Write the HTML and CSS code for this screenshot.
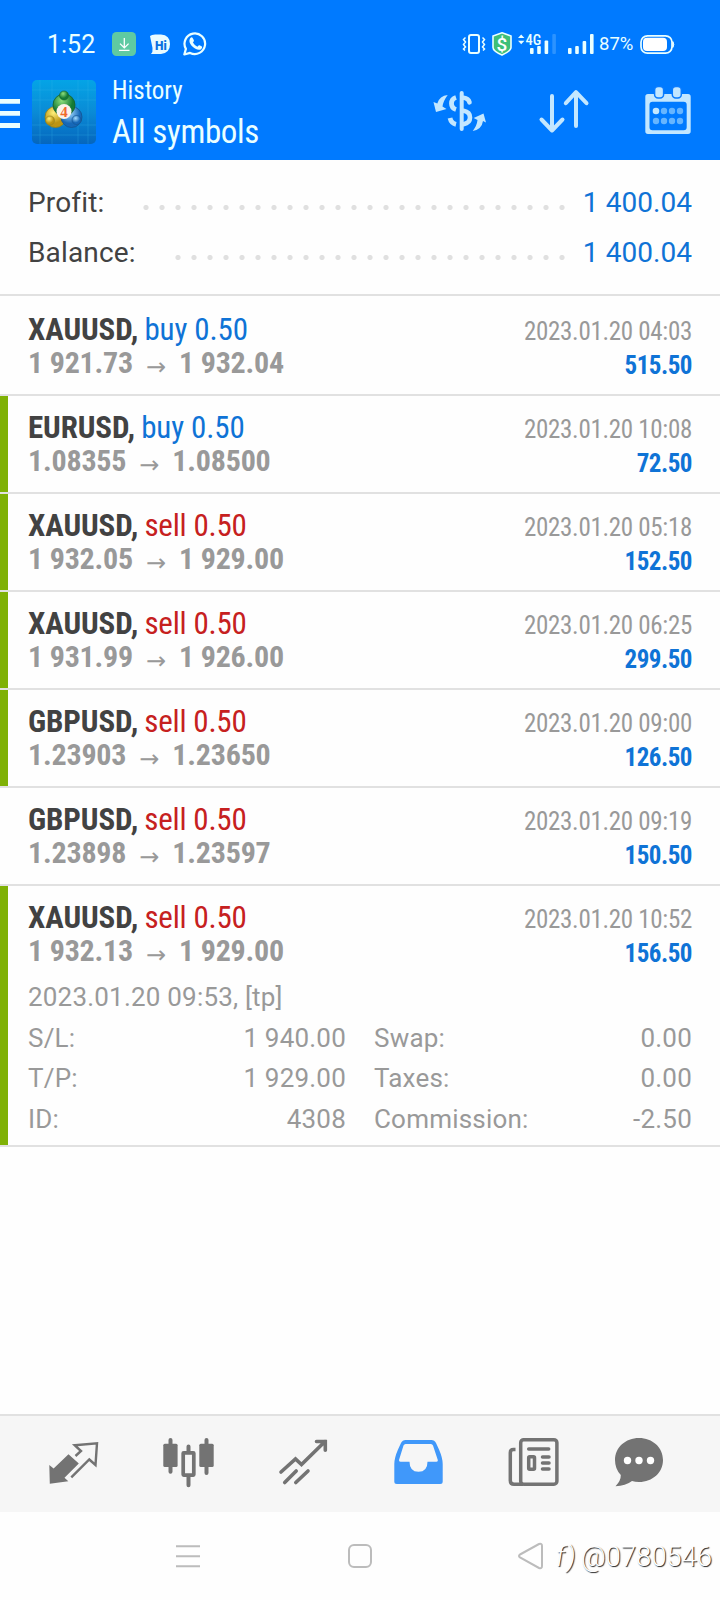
FILE: index.html
```
<!DOCTYPE html>
<html lang="en">
<head>
<meta charset="utf-8">
<title>History</title>
<link rel="stylesheet" href="styles.css">
</head>
<body>
<div class="screen">
  <header class="header">
    <div class="status">
      <span class="clock">1:52</span>
      <svg class="status-left" viewBox="112 32 96 24">
        <rect x="112" y="32" width="24" height="24" rx="4.5" fill="#5fcaa2"/>
        <path d="M124.3 38v9.5M120 43.6l4.3 4.3 4.3-4.3M119 50.3h10.5" fill="none" stroke="#fff" stroke-width="1.3"/>
        <path d="M150 36q2-2 7-1.500h4q9 .5 9 9.500t-9 10h-10q2-2 1.500-6z" fill="#e9fbff"/>
        <text x="155" y="49.500" class="hi">Hi</text>
        <path d="M184.300 54.500l1.600-5.600a10.300 10.300 0 1 1 4.200 4z" fill="none" stroke="#eaffff" stroke-width="2.200" stroke-linejoin="round"/>
        <path d="M190.200 38.200q1.500-1.500 2.500-.3l1.200 2.400q.3.900-1 2.200 1.600 2.900 4.500 4.200 1.500-1.700 2.200-1.400l2.300 1.300q.8.700-.6 2.300-2.200 2-6.300-.5-4.500-2.900-5.500-6.500-.4-2.200.7-3.700z" fill="#eaffff"/>
      </svg>
      <svg class="status-right" viewBox="462 32 134 24">
        <g fill="none" stroke="#eaffff">
          <rect x="469" y="35" width="10" height="18" rx="2" stroke-width="2"/>
          <path d="M465.500 37.500l-2 2 2 2.500-2 2.500 2 2.500-2 2 1.500 1.500M482.500 37.500l2 2-2 2.500 2 2.500-2 2.500 2 2-1.500 1.500" stroke-width="1.500"/>
        </g>
        <path d="M502 32.800l9 3.200v11.500q0 3.500-9 7.500-9-4-9-7.500V36z" fill="#3ebf78" stroke="#eaffff" stroke-width="1.600"/>
        <text x="502" y="50.500" text-anchor="middle" class="dollar">$</text>
        <path d="M518 38l3.200-3.600 3.200 3.600zM518 40.700l3.200 3.600 3.200-3.600z" fill="#eaffff"/>
        <text x="525.500" y="45.300" class="net">4G</text>
        <g fill="#eaffff">
          <rect x="530" y="48" width="3.600" height="6" rx="1"/>
          <rect x="537.200" y="46" width="3.600" height="8" rx="1"/>
          <rect x="544.600" y="40.500" width="3.600" height="13.500" rx="1"/>
          <rect x="552.300" y="34" width="3.600" height="20" rx="1" fill="#2c93ff"/>
          <rect x="568" y="48" width="3.600" height="6" rx="1"/>
          <rect x="575.200" y="46" width="3.600" height="8" rx="1"/>
          <rect x="582.600" y="41" width="3.600" height="13" rx="1"/>
          <rect x="590" y="34" width="3.600" height="20" rx="1"/>
        </g>
      </svg>
      <span class="percent">87%</span>
      <svg class="battery" viewBox="640 32 36 24">
        <rect x="641" y="35.800" width="31" height="17.400" rx="6.500" fill="none" stroke="#eaffff" stroke-width="1.700"/>
        <rect x="643" y="37.800" width="24" height="13.200" rx="4" fill="#fff"/>
        <path d="M672.800 41.500q2 3 0 6z" fill="#eaffff" stroke="#eaffff"/>
      </svg>
    </div>
    <div class="toolbar">
      <svg class="burger" viewBox="0 96 20 36"><path d="M0 101.400h20M0 113.400h20M0 125.500h20" stroke="#eaffff" stroke-width="4.800"/></svg>
      <svg class="app-icon" viewBox="0 0 64 64">
        <defs>
          <linearGradient id="bg" x1="0" y1="0" x2="0" y2="1"><stop offset="0" stop-color="#04a4e6"/><stop offset=".5" stop-color="#0a8bd6"/><stop offset="1" stop-color="#0566bd"/></linearGradient>
          <radialGradient id="green" cx=".4" cy=".3"><stop offset="0" stop-color="#8ee07c"/><stop offset="1" stop-color="#157b36"/></radialGradient>
          <radialGradient id="gold" cx=".4" cy=".3"><stop offset="0" stop-color="#fff07a"/><stop offset="1" stop-color="#bd9412"/></radialGradient>
          <radialGradient id="blue" cx=".4" cy=".3"><stop offset="0" stop-color="#a4dcff"/><stop offset="1" stop-color="#1668b8"/></radialGradient>
        </defs>
        <rect width="64" height="64" rx="5" fill="url(#bg)"/>
        <path d="M8 0v64M20 0v64M46 0v64M56 0v64M0 10h64M0 20h64M0 45h64M0 55h64" stroke="#3bb8ec" stroke-width=".6" opacity=".45"/>
        <circle cx="23.500" cy="37" r="10.500" fill="url(#gold)" stroke="#8b7f22" stroke-width=".8"/>
        <circle cx="39.500" cy="37" r="10.500" fill="url(#blue)" stroke="#145390" stroke-width=".8"/>
        <circle cx="32" cy="25" r="11" fill="url(#green)" stroke="#14612f" stroke-width=".8"/>
        <circle cx="32" cy="15.500" r="4.500" fill="url(#green)" stroke="#14612f" stroke-width=".6"/>
        <circle cx="18" cy="40.500" r="4.500" fill="url(#gold)" stroke="#8b7f22" stroke-width=".6"/>
        <circle cx="44.500" cy="40" r="4.500" fill="url(#blue)" stroke="#145390" stroke-width=".6"/>
        <circle cx="32" cy="31.500" r="7.500" fill="#fbf3ea"/>
        <text x="32" y="37" text-anchor="middle" class="four">4</text>
      </svg>
      <div class="titles">
        <div class="title-small">History</div>
        <div class="title-big">All symbols</div>
      </div>
      <svg class="actions" viewBox="432 84 260 52">
        <g fill="none" stroke="#c3e7ff" stroke-width="4" stroke-linecap="round">
          <path d="M461.700 93v36"/>
          <path d="M463.500 97.800q5 .7 6 4.500M463.500 110.800q6.500 1.200 6.500 6.700t-6.500 6.700" stroke-width="4.600"/>
          <path d="M456 97.500q-4.500 1.400-4.500 6t4.500 6M450 118q1.200 5.200 6 6.300" stroke-linecap="butt" stroke-width="4.800"/>
          <path d="M552 96v34M541.500 119.500l10.500 11 10.500-11M576 126V93M565.800 103.200l10.200-11 10.500 11" stroke-linejoin="round"/>
        </g>
        <g fill="#c3e7ff">
          <path d="M447.700 95q-8 .5-10.400 8.500l-3.800-1.500 2.500 10 10.500-3-4-2.500q.7-5.500 5.200-11.500z"/>
          <path d="M472.700 131q9-1.500 10.300-10l3 1.500-2.500-9-9.800 4.500 3.800 2q-.5 5.500-4.800 11z"/>
          <path fill-rule="evenodd" d="M648 94h40q2.700 0 2.700 2.700v34.600q0 2.700-2.700 2.700h-40q-2.700 0-2.700-2.700V96.700q0-2.700 2.700-2.700zM652.500 101.700q-3 0-3 3v22.500q0 3 3 3h31.200q3 0 3-3v-22.500q0-3-3-3z"/>
        </g>
        <g fill="#c3e7ff" stroke="#0a7cff" stroke-width="1.500">
          <rect x="654.600" y="86.500" width="9" height="11.500" rx="3.500"/>
          <rect x="672.300" y="86.500" width="9" height="11.500" rx="3.500"/>
        </g>
        <g fill="#66b5ff">
          <circle cx="656" cy="111" r="3.300" fill="#c3e7ff"/><circle cx="664" cy="111" r="3.200"/><circle cx="672" cy="111" r="3.200"/><circle cx="680" cy="111" r="3.200"/>
          <circle cx="656" cy="121" r="3.200"/><circle cx="664" cy="121" r="3.200"/><circle cx="672" cy="121" r="3.200"/><circle cx="680" cy="121" r="3.200"/>
        </g>
      </svg>
    </div>
  </header>

  <section class="summary">
    <div class="sum-row"><span>Profit:</span><i class="dots dots-long"></i><span class="sum-value">1 400.04</span></div>
    <div class="sum-row"><span>Balance:</span><i class="dots dots-short"></i><span class="sum-value">1 400.04</span></div>
  </section>

  <main class="deals">
    <article class="deal first">
      <div class="line"><span><b class="symbol">XAUUSD,</b> <span class="buy">buy 0.50</span></span><span class="time">2023.01.20 04:03</span></div>
      <div class="line result"><span class="price">1 921.73<span class="arrow">→</span>1 932.04</span><span class="gain">515.50</span></div>
    </article>
    <article class="deal closed">
      <div class="line"><span><b class="symbol">EURUSD,</b> <span class="buy">buy 0.50</span></span><span class="time">2023.01.20 10:08</span></div>
      <div class="line result"><span class="price">1.08355<span class="arrow">→</span>1.08500</span><span class="gain">72.50</span></div>
    </article>
    <article class="deal closed">
      <div class="line"><span><b class="symbol">XAUUSD,</b> <span class="sell">sell 0.50</span></span><span class="time">2023.01.20 05:18</span></div>
      <div class="line result"><span class="price">1 932.05<span class="arrow">→</span>1 929.00</span><span class="gain">152.50</span></div>
    </article>
    <article class="deal closed">
      <div class="line"><span><b class="symbol">XAUUSD,</b> <span class="sell">sell 0.50</span></span><span class="time">2023.01.20 06:25</span></div>
      <div class="line result"><span class="price">1 931.99<span class="arrow">→</span>1 926.00</span><span class="gain">299.50</span></div>
    </article>
    <article class="deal closed">
      <div class="line"><span><b class="symbol">GBPUSD,</b> <span class="sell">sell 0.50</span></span><span class="time">2023.01.20 09:00</span></div>
      <div class="line result"><span class="price">1.23903<span class="arrow">→</span>1.23650</span><span class="gain">126.50</span></div>
    </article>
    <article class="deal">
      <div class="line"><span><b class="symbol">GBPUSD,</b> <span class="sell">sell 0.50</span></span><span class="time">2023.01.20 09:19</span></div>
      <div class="line result"><span class="price">1.23898<span class="arrow">→</span>1.23597</span><span class="gain">150.50</span></div>
    </article>
    <article class="deal closed expanded">
      <div class="line"><span><b class="symbol">XAUUSD,</b> <span class="sell">sell 0.50</span></span><span class="time">2023.01.20 10:52</span></div>
      <div class="line result"><span class="price">1 932.13<span class="arrow">→</span>1 929.00</span><span class="gain">156.50</span></div>
      <div class="details">
        <div class="opened">2023.01.20 09:53, [tp]</div>
        <div class="pair"><span>S/L:</span><span>1 940.00</span></div>
        <div class="pair"><span>Swap:</span><span>0.00</span></div>
        <div class="pair"><span>T/P:</span><span>1 929.00</span></div>
        <div class="pair"><span>Taxes:</span><span>0.00</span></div>
        <div class="pair"><span>ID:</span><span>4308</span></div>
        <div class="pair"><span>Commission:</span><span>-2.50</span></div>
      </div>
    </article>
  </main>

  <nav class="tabs">
    <svg class="tab" viewBox="16 1416 115 96">
      <path d="M49.300 1465l4.300 3.500 14.900-14.200 10.300 9.200-14.300 14.300 3.800 3.500-18.500 2.500z" fill="#737373"/>
      <path d="M75.500 1456l5.500-5-6.300-5.800 22.300-2-1.500 21.800-6.200-5.500-18 17.800" fill="none" stroke="#737373" stroke-width="2.400"/>
    </svg>
    <svg class="tab" viewBox="131 1416 115 96">
      <path d="M170.500 1440v31.700M188.500 1446.500v5M188.500 1477v8.200M206.500 1440v33" stroke="#737373" stroke-width="4" stroke-linecap="round"/>
      <g fill="#737373"><rect x="163.300" y="1443.700" width="14.300" height="23.300" rx="1.500"/><rect x="199.300" y="1443.700" width="14.400" height="23.300" rx="1.500"/></g>
      <rect x="183.200" y="1452.800" width="10.600" height="22.300" rx=".5" fill="#f6f6f6" stroke="#737373" stroke-width="3.700"/>
    </svg>
    <svg class="tab" viewBox="246 1416 115 96">
      <path d="M281 1472l14.500-13 6 5.500 23.500-23M316.500 1441.500h8.800v8.800M284.700 1482.500l11.500-11.500M295.800 1482.500l12.200-11.500" fill="none" stroke="#737373" stroke-width="3.600" stroke-linecap="round"/>
    </svg>
    <svg class="tab" viewBox="361 1416 115 96">
      <path fill="#4098fa" fill-rule="evenodd" d="M394.300 1464q0-6 3.700-14.500l3-6.500q1.500-3 4.500-3h26q3 0 4.500 3l3 6.500q3.700 8.500 3.700 14.500v17.500q0 2.500-2.500 2.500h-43.400q-2.500 0-2.500-2.500zM405.500 1444q-1.300 0-2 1.500l-4.500 14.500q-.3 1.800 1.500 1.800h9q0 10 9 10t9-10h9q1.700 0 1.300-1.800l-4.800-14.500q-.7-1.500-2-1.500z"/>
    </svg>
    <svg class="tab" viewBox="476 1416 115 96">
      <g fill="none" stroke="#737373" stroke-width="3.500">
        <path d="M515.500 1449.500h-2q-3.200 0-3.200 3.200v27.700q0 3.800 3.800 3.800h9"/>
        <rect x="520.700" y="1439.700" width="36.200" height="44.500" rx="3"/>
        <path d="M528.700 1449h20M542.500 1457h6.500M542.500 1463h6.500M542.500 1469h6.500" stroke-linecap="round"/>
        <rect x="528.700" y="1456.700" width="5.800" height="12.600" rx="1"/>
      </g>
    </svg>
    <svg class="tab" viewBox="591 1416 115 96">
      <path fill="#737373" d="M639 1438c13.500 0 24 9.500 24 22s-10.500 22-24 22q-4 0-7-1-6.500 5-16.500 5.200 5.500-5.500 5.300-11.200-5.800-6-5.800-15c0-12.500 10.500-22 24-22z"/>
      <g fill="#fff"><circle cx="627.500" cy="1460.500" r="3.700"/><circle cx="639" cy="1460.500" r="3.700"/><circle cx="650.500" cy="1460.500" r="3.700"/></g>
    </svg>
  </nav>

  <footer class="system">
    <svg class="sys-icons" viewBox="172 1538 376 36">
      <g fill="none" stroke="#bcbcbc" stroke-width="2">
        <path d="M176 1546.300h24M176 1556.300h24M176 1566.300h24"/>
        <rect x="349" y="1545" width="22" height="22" rx="5"/>
        <path d="M520 1554.500l19-10.500q3-1 3 2v20q0 3-3 2l-19-10.500q-2-1.500 0-3z"/>
      </g>
    </svg>
    <div class="watermark"><span class="mark">f)</span>@0780546</div>
  </footer>
</div>
</body>
</html>
```
FILE: styles.css
```
* { box-sizing: border-box; }
body { margin: 0; background: #fff; font-family: Roboto, "Liberation Sans", sans-serif; }
svg { display: block; flex: none; }
.screen { width: 720px; height: 1600px; display: flex; flex-direction: column; background: #fefefe; overflow: hidden; }

.header { height: 160px; padding-top: 20px; background: #007aff; color: #eaffff; }
.status { height: 48px; display: flex; align-items: center; padding-left: 47px; }
.clock { width: 65px; padding-top: 1px; font-size: 25px; line-height: 30px; }
.status-left { width: 96px; height: 24px; }
.status-right { width: 134px; height: 24px; margin-left: 254px; }
.percent { width: 44px; padding-left: 3px; font-size: 18.5px; line-height: 24px; }
.battery { width: 36px; height: 24px; }
.hi { font: 900 12px Roboto, sans-serif; fill: #0b6fe0; }
.dollar { font: 500 19px Roboto, sans-serif; fill: #fff; }
.net { font: 500 14.500px "Roboto Condensed", sans-serif; fill: #eaffff; }
.four { font: 700 15px "Liberation Serif", serif; fill: #f0692c; }

.toolbar { display: flex; align-items: flex-start; padding-top: 6px; }
.burger { width: 20px; height: 36px; margin-top: 22px; }
.app-icon { width: 64px; height: 64px; margin: 6px 0 0 12px; }
.titles { width: 320px; padding: 1px 0 0 16px; font-family: "Roboto Condensed", Roboto, sans-serif; }
.title-small { font-size: 25px; line-height: 32px; }
.title-big { margin-top: 4px; font-size: 33px; line-height: 42px; letter-spacing: -.35px; }
.actions { width: 260px; height: 52px; margin: 10px 0 0 16px; }

.summary { height: 136px; padding: 18px 28px 0; border-bottom: 2px solid #e1e1e1; }
.sum-row { height: 50px; display: flex; font-size: 28px; line-height: 50px; color: #424242; letter-spacing: .15px; }
.sum-value { width: 122px; text-align: right; color: #0f73d6; letter-spacing: .05px; }
.dots { height: 16px; margin: 22px 0 0 auto; background: radial-gradient(circle at 8px 7.500px, #e0e0e0 2.2px, transparent 3px) 0 0 / 16px 16px; }
.dots-long { width: 432px; }
.dots-short { width: 400px; }

.deal { height: 98px; padding: 15px 28px 0; border-bottom: 2px solid #e1e1e1; font-family: "Roboto Condensed", Roboto, sans-serif; }
.first { height: 100px; padding-top: 17px; }
.closed { background: linear-gradient(#7fb106, #7fb106) 0 0 / 8px 100% no-repeat; }
.expanded { height: 261px; }
.line { height: 33px; display: flex; justify-content: space-between; align-items: baseline; font-size: 31px; line-height: 34px; }
.result { height: 34px; align-items: flex-start; }
.symbol { color: #424242; letter-spacing: -.1px; }
.buy, .sell { margin-left: -1px; }
.buy { color: #0f73d6; letter-spacing: -.1px; }
.sell { color: #c62020; letter-spacing: -.2px; }
.time { font-size: 25px; color: #999; letter-spacing: -.3px; }
.price { font-size: 30px; font-weight: 700; color: #999; letter-spacing: -.2px; }
.arrow { display: inline-block; width: 46px; text-align: center; font: 400 24px/24px "DejaVu Sans", sans-serif; vertical-align: -2px; }
.gain { margin-top: 3px; font-size: 25px; font-weight: 700; color: #0f73d6; letter-spacing: -.5px; }

.details { margin-top: 9px; display: grid; grid-template-columns: 318px 318px; grid-auto-rows: 40.500px; column-gap: 28px; font: 400 26px/40px Roboto, sans-serif; letter-spacing: .2px; color: #999; }
.opened { grid-column: 1 / 3; }
.pair { display: flex; justify-content: space-between; }

.tabs { height: 98px; margin-top: auto; padding-left: 16px; display: flex; background: #f6f6f6; border-top: 2px solid #e1e1e1; }
.tab { width: 115px; height: 96px; }

.system { position: relative; height: 88px; padding: 26px 0 0 172px; }
.sys-icons { width: 376px; height: 36px; }
.watermark { position: absolute; left: 556px; top: 29px; display: flex; font-size: 27px; font-weight: 300; line-height: 32px; letter-spacing: .2px; color: #fff; text-shadow: 1px 1px 1px #222; }
.mark { width: 25px; letter-spacing: 2px; font-style: italic; }
```
